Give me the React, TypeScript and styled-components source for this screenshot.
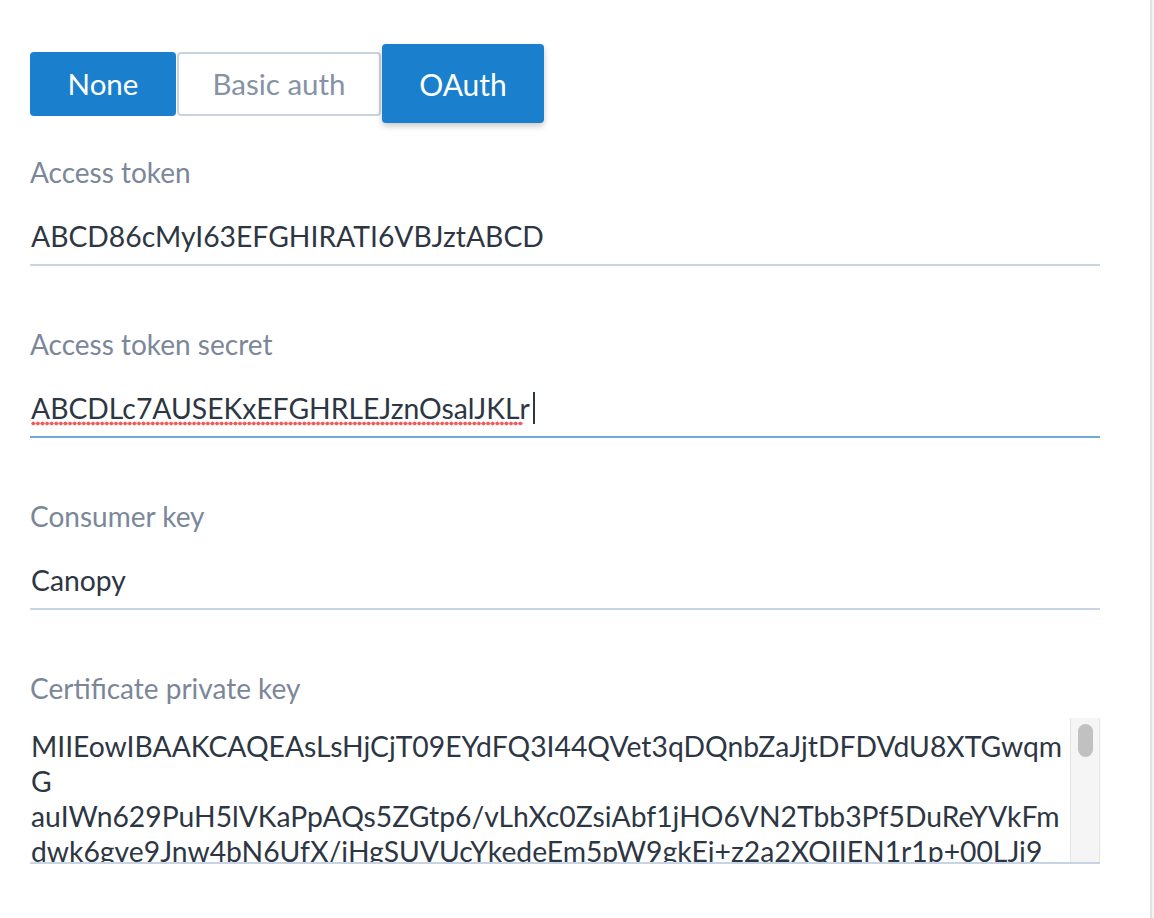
import React, { useEffect, useRef } from "react";
import styled, { createGlobalStyle } from "styled-components";

const GlobalStyle = createGlobalStyle`
  html, body, #root {
    margin: 0;
    padding: 0;
    height: 100%;
    background: #ffffff;
  }
  body {
    font-family: Lato, "Open Sans", sans-serif;
    overflow: hidden;
  }
  * { box-sizing: border-box; }
`;

const Shell = styled.div`
  display: flex;
  height: 100%;
`;

const Main = styled.main`
  width: 1150px;
  padding: 44px 50px 0 30px;
  display: flex;
  flex-direction: column;
`;

const EdgeTrack = styled.div`
  flex: 1;
  background: #f4f4f4;
  border-left: 2px solid #e2e2e2;
`;

const ButtonGroup = styled.div`
  display: flex;
  align-items: center;
  height: 79px;
  gap: 1px;
  margin-bottom: 32px;
`;

const ToggleButton = styled.button<{ $active?: boolean; $raised?: boolean; $w: number }>`
  width: ${(p) => p.$w}px;
  height: ${(p) => (p.$raised ? 79 : 64)}px;
  border-radius: 4px;
  font-family: Lato, sans-serif;
  font-size: ${(p) => (p.$raised ? 30 : 29.5)}px;
  padding: 0;
  cursor: pointer;
  background: ${(p) => (p.$active ? "#1a7fcc" : "#ffffff")};
  color: ${(p) => (p.$active ? "#ffffff" : "#8692a6")};
  border: ${(p) => (p.$active ? "none" : "2px solid #c9d4e1")};
  box-shadow: ${(p) => (p.$raised ? "0 3px 6px rgba(0,0,0,0.22)" : "none")};
`;

const Field = styled.div`
  display: flex;
  flex-direction: column;
  margin-bottom: 61px;
`;

const Label = styled.label`
  font-size: 28px;
  line-height: 34px;
  color: #7b8799;
  margin-bottom: 23px;
`;

const InputWrap = styled.div`
  position: relative;
  display: flex;
  flex-direction: column;
`;

const TextInput = styled.input<{ $focused?: boolean }>`
  height: 54px;
  border: none;
  border-bottom: 2px solid ${(p) => (p.$focused ? "#72a9db" : "#c6d4e3")};
  outline: none;
  padding: 0 0 4px 1px;
  font-family: Lato, sans-serif;
  font-size: 28.3px;
  color: #2d3643;
  background: transparent;
  caret-color: #2d3643;
`;

const SpellMark = styled.span<{ $w: number }>`
  position: absolute;
  left: 1px;
  top: 37px;
  width: ${(p) => p.$w}px;
  height: 5px;
  background-image: radial-gradient(circle, #f05a58 1.7px, transparent 2.2px);
  background-size: 4.6px 5px;
  background-repeat: repeat-x;
  pointer-events: none;
`;

const Caret = styled.span<{ $x: number }>`
  position: absolute;
  left: ${(p) => p.$x}px;
  top: 8px;
  width: 2px;
  height: 32px;
  background: #2d3643;
  pointer-events: none;
`;

const KeyBox = styled.div`
  margin-top: -10px;
  height: 146px;
  display: flex;
  border-bottom: 2px solid #c6d4e3;
`;

const KeyArea = styled.textarea`
  flex: 1;
  border: none;
  outline: none;
  resize: none;
  padding: 11px 0 0 1px;
  font-family: Lato, sans-serif;
  font-size: 28.3px;
  line-height: 35px;
  color: #2d3643;
  background: transparent;
  overflow: hidden;
  white-space: pre;
`;

const ScrollRail = styled.div`
  width: 30px;
  background: #f5f5f5;
  border-left: 1px solid #e4e4e4;
  border-right: 1px solid #e4e4e4;
  padding: 6px 6px 0 7px;
`;

const ScrollThumb = styled.div`
  height: 33px;
  border-radius: 8px;
  background: #c1c1c1;
`;

const privateKey = [
  "MIIEowIBAAKCAQEAsLsHjCjT09EYdFQ3I44QVet3qDQnbZaJjtDFDVdU8XTGwqm",
  "G",
  "auIWn629PuH5lVKaPpAQs5ZGtp6/vLhXc0ZsiAbf1jHO6VN2Tbb3Pf5DuReYVkFm",
  "dwk6gve9Jnw4bN6UfX/iHgSUVUcYkedeEm5pW9gkEj+z2a2XQIIEN1r1p+00LJi9",
  "hT0X5bGx1QmUPr4xgWkq3nFzLhvO7aQ2ZyRb8SduTcEo6PjKw9mVaN1tXiC4rGfB",
  "Yq2Ld7ZsHkUwP0eA5xT3jOcRn8MvbI6GlFy1K9aNqE4WzrSdu2Xh7oVtCp0BgJmi",
  "Fe3kR5nYs8wQxLpH2cUaTbVz6Mo1gDI9ArjKW4ltNhO7PqC0vSE3dZGyXfmBu5iJ",
  "-----END RSA PRIVATE KEY-----",
].join("\n");

export default function App() {
  const secretRef = useRef<HTMLInputElement>(null);

  useEffect(() => {
    const el = secretRef.current;
    if (el) {
      const n = el.value.length;
      el.setSelectionRange(n, n);
    }
  }, []);

  return (
    <>
      <GlobalStyle />
      <Shell>
        <Main>
          <ButtonGroup>
            <ToggleButton $active $w={146}>None</ToggleButton>
            <ToggleButton $w={204}>Basic auth</ToggleButton>
            <ToggleButton $active $raised $w={162}>OAuth</ToggleButton>
          </ButtonGroup>

          <Field>
            <Label>Access token</Label>
            <TextInput defaultValue="ABCD86cMyI63EFGHIRATI6VBJztABCD" spellCheck={false} />
          </Field>

          <Field>
            <Label>Access token secret</Label>
            <InputWrap>
              <TextInput
                ref={secretRef}
                $focused
                defaultValue="ABCDLc7AUSEKxEFGHRLEJznOsalJKLr"
                spellCheck={false}
              />
              <SpellMark $w={492} />
              <Caret $x={503} />
            </InputWrap>
          </Field>

          <Field>
            <Label>Consumer key</Label>
            <TextInput defaultValue="Canopy" spellCheck={false} />
          </Field>

          <Field>
            <Label>Certificate private key</Label>
            <KeyBox>
              <KeyArea defaultValue={privateKey} spellCheck={false} />
              <ScrollRail>
                <ScrollThumb />
              </ScrollRail>
            </KeyBox>
          </Field>
        </Main>
        <EdgeTrack />
      </Shell>
    </>
  );
}
